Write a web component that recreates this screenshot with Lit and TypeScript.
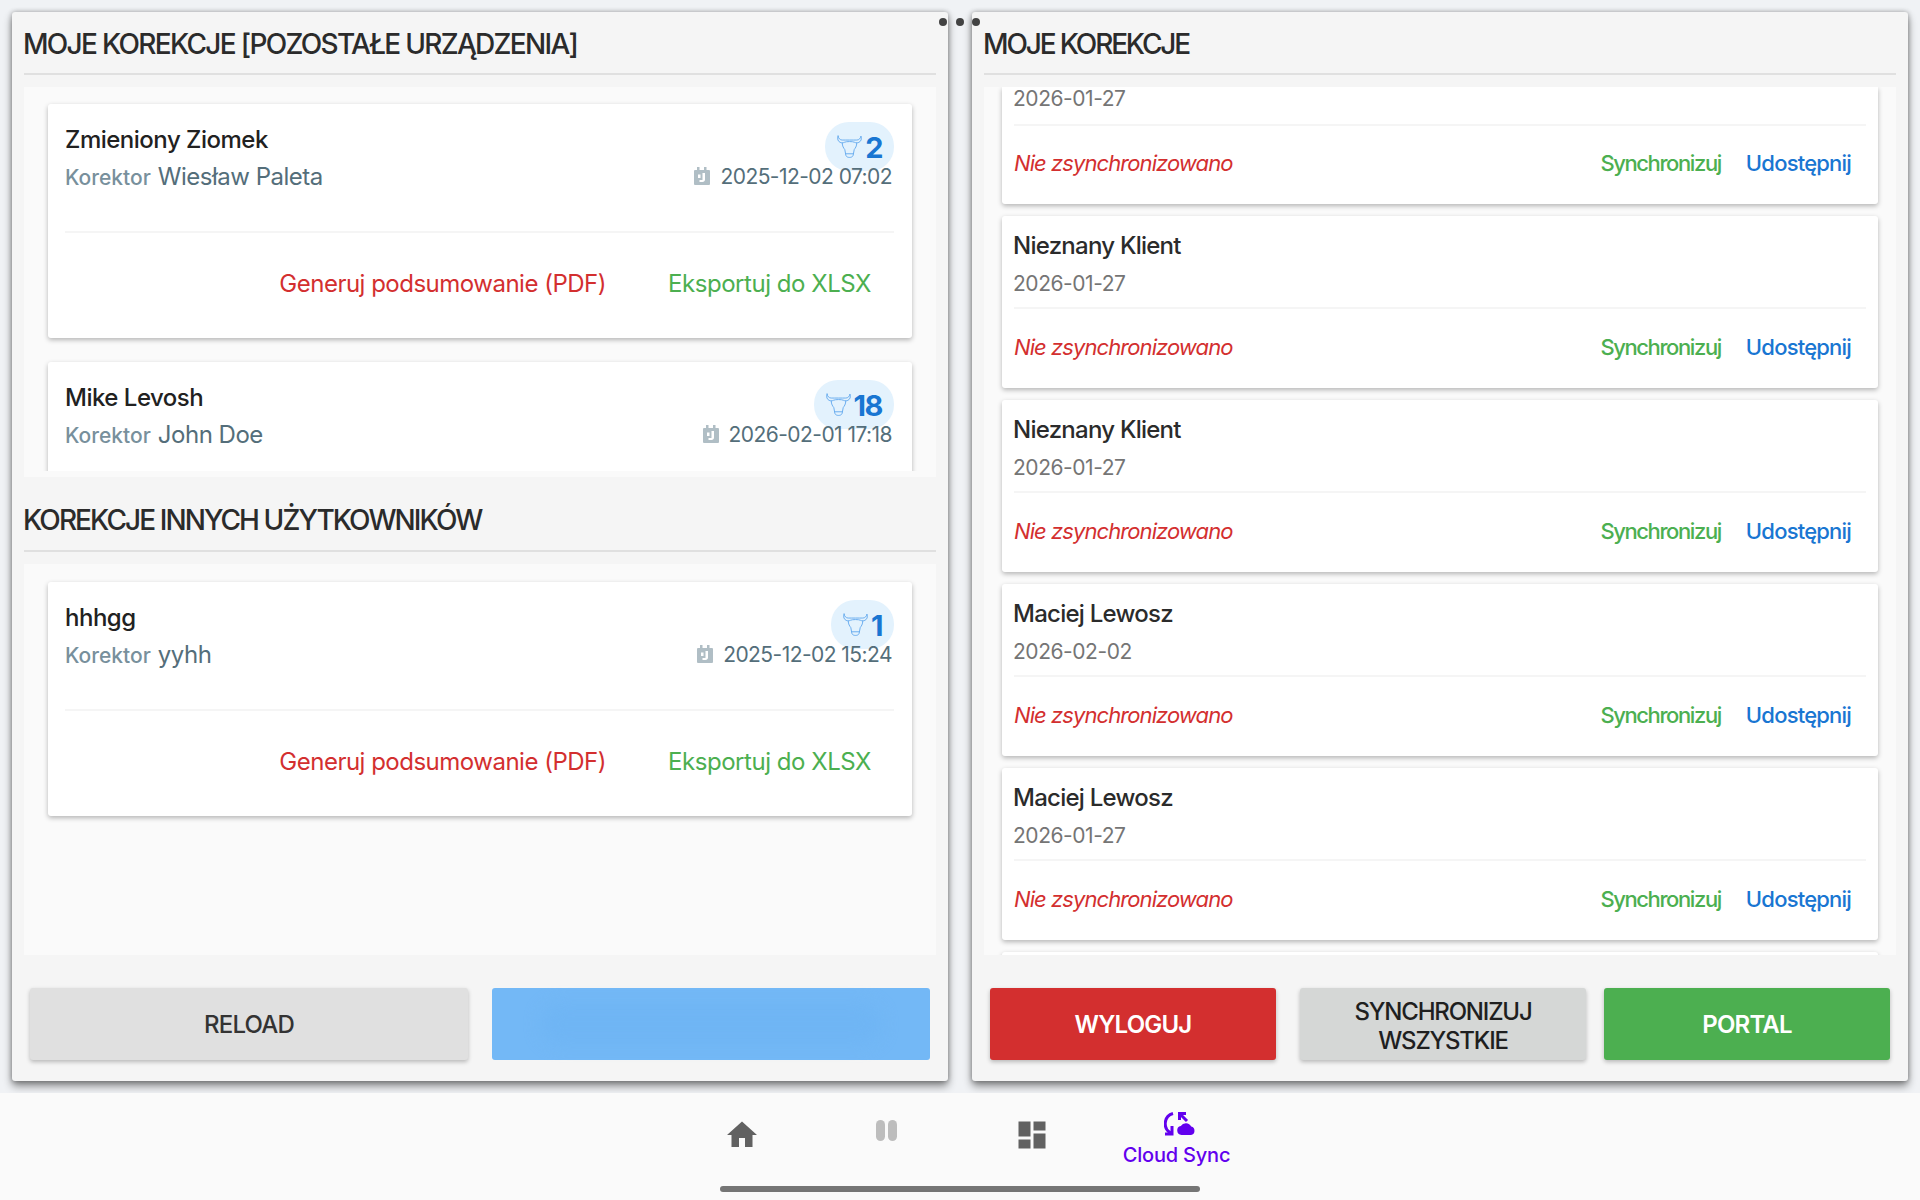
import { LitElement, html, css } from "lit";
import { customElement } from "lit/decorators.js";

const bull = html`<svg class="bull" viewBox="0 0 24 22" fill="none" stroke="#64a9ee" stroke-width="0.9" stroke-linejoin="round" stroke-linecap="round">
  <path d="M1 1 C0 4 1 6 3 7 C4.500 7.800 6 7.500 7 7 C9 6 15 6 17 7 C18 7.500 19.500 7.800 21 7 C23 6 24 4 23 1 C22.500 3.500 21 4.800 19 4.800 C16 4.800 8 4.800 5 4.800 C3 4.800 1.500 3.500 1 1 Z"/>
  <path d="M5 7.500 C5 11 6.500 12.500 7.500 14 L8.500 19.500 C9 21 10.500 21.500 12 21.500 C13.500 21.500 15 21 15.500 19.500 L16.500 14 C17.500 12.500 19 11 19 7.500"/>
  <path d="M8.800 18 H15.200"/>
</svg>`;

const calendar = html`<svg class="cal" viewBox="0 0 16 18">
  <path fill="#b0bec5" d="M3 0h2.500v3H10V0h2.500v3H15a1 1 0 0 1 1 1v13a1 1 0 0 1-1 1H1a1 1 0 0 1-1-1V4a1 1 0 0 1 1-1h2z"/>
  <path fill="#fff" d="M8.500 6h2.500v6.500c0 1.500-1 2.500-2.500 2.500H5.500v-2h3zM4 7.500h2.500V11H4z"/>
</svg>`;

interface Corr { name: string; who: string; count: string; date: string; clipped?: boolean }

const mine: Corr[] = [
  { name: "Zmieniony Ziomek", who: "Wiesław Paleta", count: "2", date: "2025-12-02 07:02" },
  { name: "Mike Levosh", who: "John Doe", count: "18", date: "2026-02-01 17:18", clipped: true },
];
const others: Corr[] = [{ name: "hhhgg", who: "yyhh", count: "1", date: "2025-12-02 15:24" }];

const sync = [
  { name: "Nieznany Klient", date: "2026-01-27" },
  { name: "Nieznany Klient", date: "2026-01-27" },
  { name: "Maciej Lewosz", date: "2026-02-02" },
  { name: "Maciej Lewosz", date: "2026-01-27" },
];

@customElement("app-root")
export class AppRoot extends LitElement {
  static styles = css`
    :host { display: block; width: 1920px; height: 1200px; background: #f0f2f5; font-family: Inter, "Liberation Sans", sans-serif; overflow: hidden; }
    * { box-sizing: border-box; }
    .page { height: 1200px; display: flex; flex-direction: column; }
    .main { position: relative; height: 1093px; padding: 12px; display: grid; grid-template-columns: 936px 936px; gap: 24px; }
    .panel { height: 1069px; background: #f5f5f5; border-radius: 3px; padding: 0 12px; display: flex; flex-direction: column; box-shadow: 0 5px 9px rgba(0,0,0,.45), 0 0 5px rgba(0,0,0,.3); }
    .dots { position: absolute; left: 939px; top: 18px; display: flex; gap: 8.500px; z-index: 2; }
    .dots i { width: 8px; height: 8px; border-radius: 50%; background: #424242; display: block; }
    .title { height: 63px; border-bottom: 2px solid #e0e0e0; font-size: 28px; font-weight: 500; color: #2b2b2b; display: flex; align-items: center; padding-top: 2px; letter-spacing: -1.7px; white-space: nowrap; flex: none; }
    .title span { margin-left: -1px; }
    .title.second { height: 75px; padding-top: 12px; letter-spacing: -1.92px; }
    .title.third { letter-spacing: -2.15px; }
    .region { margin-top: 12px; background: #fafafa; flex: none; }
    .r1 { height: 390px; padding-bottom: 6px; }
    .r1 .clip { height: 384px; overflow: hidden; padding: 17px 24px 0; display: flex; flex-direction: column; gap: 24px; }
    .r2 { height: 391px; padding: 18px 24px 0; }
    .r3 { height: 868px; overflow: hidden; padding: 0 18px; display: flex; flex-direction: column; gap: 12px; }
    .card { background: #fff; border-radius: 3px; box-shadow: 0 2px 5px rgba(0,0,0,.28); flex: none; }
    .corr { height: 234px; padding: 18px 18px 0 17px; display: flex; flex-direction: column; }
    .row1 { display: flex; justify-content: space-between; align-items: flex-start; height: 42px; }
    .name { font-size: 24px; line-height: 36px; font-weight: 500; color: #212121; letter-spacing: -0.5px; }
    .badge { height: 49px; min-width: 62px; border-radius: 24px; background: #e3f2fd; display: flex; align-items: center; padding: 0 12px; gap: 3px; color: #1976d2; font-size: 29px; font-weight: 700; letter-spacing: -1.5px; position: relative; }
    .badge span { padding-top: 2px; }
    .bull { width: 25px; height: 23px; flex: none; }
    .row2 { display: flex; justify-content: space-between; align-items: center; height: 24px; padding-right: 2px; position: relative; }
    .lab { color: #78909c; font-size: 21px; font-weight: 500; letter-spacing: 0; margin-right: 7px; }
    .who { color: #546e7a; font-size: 24px; letter-spacing: -0.5px; }
    .when { color: #546e7a; font-size: 21px; letter-spacing: -0.55px; display: flex; align-items: center; gap: 10px; white-space: nowrap; }
    .cal { width: 16px; height: 18px; flex: none; }
    .sep { height: 2px; background: #f5f5f5; flex: none; }
    .corr .sep { margin-top: 43px; }
    .acts { display: flex; justify-content: flex-end; gap: 62px; padding: 33px 23px 0 0; font-size: 24px; letter-spacing: -0.45px; line-height: 36px; white-space: nowrap; }
    .acts .red { letter-spacing: -0.5px; }
    .red { color: #d32f2f; }
    .green { color: #4caf50; }
    .blue { color: #1976d2; }
    .foot { margin-top: 33px; height: 72px; display: grid; flex: none; }
    .foot.f1 { grid-template-columns: 438px 438px; gap: 24px; padding: 0 6px; }
    .foot.f2 { grid-template-columns: 286px 286px 286px; column-gap: 24px; padding: 0 6px; }
    .foot.f2 .btn:nth-child(3) { margin-left: -6px; width: 286px; }
    .btn { border-radius: 3px; display: flex; align-items: center; justify-content: center; text-align: center; font-size: 24px; font-weight: 500; line-height: 29px; letter-spacing: -0.8px; box-shadow: 0 2px 4px rgba(0,0,0,.25); }
    .grey { background: #e0e0e0; color: #333; }
    .sync { background: #d5d7d6; color: #1f1f1f; padding-top: 4px; letter-spacing: -1.2px; }
    .bred { background: #d32f2f; color: #fff; font-weight: 600; }
    .bgreen { background: #4caf50; color: #fff; font-weight: 600; }
    .bblue { background: #73b8f6; box-shadow: none; }
    .smudge { width: 340px; height: 40px; border-radius: 20px; background: #6fb5f4; filter: blur(8px); }
    .sc { padding: 0 12px 0 11px; height: 172px; display: flex; flex-direction: column; }
    .sc.cut { height: 117px; border-radius: 0 0 3px 3px; }
    .sc .sep { margin-left: 1px; }
    .sc .nm { font-size: 24px; line-height: 36px; font-weight: 500; color: #2b2b2b; letter-spacing: -0.75px; margin-top: 12px; }
    .sc .dt { font-size: 21px; line-height: 24px; color: #757575; letter-spacing: -0.45px; margin-top: 8px; height: 35px; flex: none; }
    .sc.cut .dt { margin-top: 0; height: 37px; }
    .sc .foot2 { display: flex; align-items: center; justify-content: space-between; padding: 20px 15px 0 1px; font-size: 22px; line-height: 36px; letter-spacing: -0.92px; }
    .sc.cut .foot2 { padding-top: 19px; }
    .st { font-style: italic; color: #d32f2f; }
    .links { display: flex; gap: 25px; font-weight: 500; }
    .links .green { letter-spacing: -1.4px; }
    .links .blue { letter-spacing: -0.8px; }
    .nav { height: 107px; background: #fafafa; position: relative; z-index: 3; display: flex; flex-direction: column; align-items: center; flex: none; }
    .items { height: 93px; width: 580px; margin-right: 2px; display: grid; grid-template-columns: repeat(4, 145px); flex: none; }
    .it { display: flex; flex-direction: column; align-items: center; padding-top: 24px; }
    .it svg { width: 36px; height: 36px; fill: #616161; display: block; }
    .pause { padding-top: 27px; flex-direction: row; justify-content: center; align-items: flex-start; gap: 3px; }
    .pause i { width: 9px; height: 21px; border-radius: 4.500px; background: #bdbdbd; display: block; }
    .it.cloud { padding-top: 18px; color: #6200ee; font-size: 20px; line-height: 24px; font-weight: 500; letter-spacing: -0.2px; white-space: nowrap; }
    .it.cloud svg { width: 32px; height: 25px; fill: #6200ee; margin: 0 0 7px 7px; }
    .cloud .ln { fill: none; stroke: #6200ee; stroke-width: 3; }
    .bar { width: 480px; height: 6px; border-radius: 3px; background: #757575; flex: none; }
  `;

  corr(c: Corr) {
    return html`<div class="card corr">
      <div class="row1"><div class="name">${c.name}</div><div class="badge">${bull}<span>${c.count}</span></div></div>
      <div class="row2">
        <div><span class="lab">Korektor</span><span class="who">${c.who}</span></div>
        <div class="when">${calendar}<span>${c.date}</span></div>
      </div>
      ${c.clipped
        ? null
        : html`<div class="sep"></div>
            <div class="acts"><span class="red">Generuj podsumowanie (PDF)</span><span class="green">Eksportuj do XLSX</span></div>`}
    </div>`;
  }

  syncFoot() {
    return html`<div class="foot2"><span class="st">Nie zsynchronizowano</span><span class="links"><span class="green">Synchronizuj</span><span class="blue">Udostępnij</span></span></div>`;
  }

  render() {
    return html`<div class="page">
      <div class="main">
        <div class="dots"><i></i><i></i><i></i></div>
        <section class="panel">
          <div class="title"><span>MOJE KOREKCJE [POZOSTAŁE URZĄDZENIA]</span></div>
          <div class="region r1"><div class="clip">${mine.map((c) => this.corr(c))}</div></div>
          <div class="title second"><span>KOREKCJE INNYCH UŻYTKOWNIKÓW</span></div>
          <div class="region r2">${others.map((c) => this.corr(c))}</div>
          <div class="foot f1">
            <div class="btn grey">RELOAD</div>
            <div class="btn bblue"><div class="smudge"></div></div>
          </div>
        </section>
        <section class="panel">
          <div class="title third"><span>MOJE KOREKCJE</span></div>
          <div class="region r3">
            <div class="card sc cut"><div class="dt">2026-01-27</div><div class="sep"></div>${this.syncFoot()}</div>
            ${sync.map((s) => html`<div class="card sc"><div class="nm">${s.name}</div><div class="dt">${s.date}</div><div class="sep"></div>${this.syncFoot()}</div>`)}
            <div class="card sc"></div>
          </div>
          <div class="foot f2">
            <div class="btn bred">WYLOGUJ</div>
            <div class="btn sync">SYNCHRONIZUJ<br />WSZYSTKIE</div>
            <div class="btn bgreen">PORTAL</div>
          </div>
        </section>
      </div>
      <nav class="nav">
        <div class="items">
          <div class="it"><svg viewBox="0 0 24 24"><path d="M10 20v-6h4v6h5v-8h3L12 3 2 12h3v8z"/></svg></div>
          <div class="it pause"><i></i><i></i></div>
          <div class="it"><svg viewBox="0 0 24 24"><path d="M3 13h8V3H3v10zm0 8h8v-6H3v6zm10 0h8V11h-8v10zm0-18v6h8V3h-8z"/></svg></div>
          <div class="it cloud">
            <svg viewBox="0 0 32 25">
              <path class="ln" d="M9 2.500 A10.500 10.500 0 0 0 7 22"/>
              <path class="ln" d="M1 23 H8 V15"/>
              <path class="ln" d="M22 2.500 H15.500 V9 M15.500 2.500 L23 10"/>
              <path d="M17.500 24 A4.500 4.500 0 0 1 16.800 15.100 A6 6 0 0 1 27.200 15.600 A4.300 4.300 0 0 1 27 24 Z"/>
            </svg>
            <span>Cloud Sync</span>
          </div>
        </div>
        <div class="bar"></div>
      </nav>
    </div>`;
  }
}
